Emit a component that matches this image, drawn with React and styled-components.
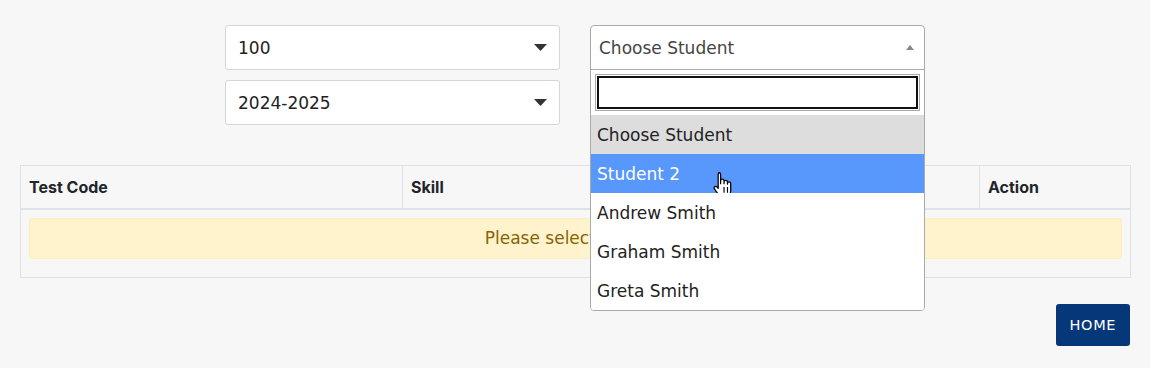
import React from 'react'
import styled, {createGlobalStyle} from 'styled-components'

const GlobalStyle = createGlobalStyle`
  body {
    margin: 0;
    background: #f7f7f7;
    font-family: "DejaVu Sans", "Liberation Sans", sans-serif;
    color: #212529;
  }
`

const students = ['Choose Student', 'Student 2', 'Andrew Smith', 'Graham Smith', 'Greta Smith']

function Caret() {
  return (
    <svg width="13" height="7" viewBox="0 0 13 7">
      <path d="M0 0 H13 L6.5 7 Z" fill="#333" />
    </svg>
  )
}

function HandCursor() {
  return (
    <svg width="20" height="26" viewBox="0 0 20 26">
      <path
        d="M5 1.5c1 0 1.6.7 1.6 1.6V11V8.6c0-.9.7-1.5 1.5-1.5s1.5.6 1.5 1.5V11V9.6c0-.9.7-1.5 1.5-1.5s1.5.6 1.5 1.5V11.5V10.8c0-.9.7-1.4 1.4-1.4s1.4.5 1.4 1.4v6.4c0 3.6-2.3 6.4-5.8 6.4H9.4c-2 0-3.2-1-4.3-2.5L1.3 15.6c-.5-.8-.3-1.600.4-2s1.5-.2 2 .4l.8 1.1V3.1c0-.9.6-1.6 1.5-1.6z"
        fill="#fff"
        stroke="#000"
        strokeWidth="1.1"
        strokeLinejoin="round"
      />
      <path d="M9.6 14v5M12.6 14v5" stroke="#000" strokeWidth="1" />
    </svg>
  )
}

function App() {
  return (
    <>
      <GlobalStyle />
      <Page>
        <Filters>
          <Column>
            <SelectBox>
              <span>100</span>
              <Caret />
            </SelectBox>
            <SelectBox>
              <span>2024-2025</span>
              <Caret />
            </SelectBox>
          </Column>
          <StudentPicker>
            <PickerHead>
              <span>Choose Student</span>
              <UpArrow />
            </PickerHead>
            <Dropdown>
              <SearchWrap>
                <SearchInput type="text" />
              </SearchWrap>
              {students.map((name, i) => (
                <Option key={name} $state={i === 0 ? 'selected' : i === 1 ? 'hover' : ''}>
                  {name}
                  {i === 1 && (
                    <CursorSpot>
                      <HandCursor />
                    </CursorSpot>
                  )}
                </Option>
              ))}
            </Dropdown>
          </StudentPicker>
        </Filters>

        <Table>
          <colgroup>
            <col style={{width: 382}} />
            <col style={{width: 288}} />
            <col style={{width: 289}} />
            <col style={{width: 151}} />
          </colgroup>
          <thead>
            <tr>
              <Th>Test Code</Th>
              <Th>Skill</Th>
              <Th>Score</Th>
              <Th>Action</Th>
            </tr>
          </thead>
          <tbody>
            <tr>
              <Td colSpan={4}>
                <Alert>Please select student</Alert>
              </Td>
            </tr>
          </tbody>
        </Table>

        <Footer>
          <HomeButton>HOME</HomeButton>
        </Footer>
      </Page>
    </>
  )
}

const Page = styled.div`
  padding: 25px 20px 0;
`

const Filters = styled.div`
  display: flex;
  justify-content: center;
  gap: 30px;
`

const Column = styled.div`
  display: flex;
  flex-direction: column;
  gap: 10px;
  width: 335px;
`

const SelectBox = styled.div`
  height: 45px;
  box-sizing: border-box;
  background: #fff;
  border: 1px solid #d3d6dc;
  border-radius: 3px;
  display: flex;
  align-items: center;
  justify-content: space-between;
  padding: 0 12px 0 12px;
  font-size: 17px;
  color: #222;
`

const StudentPicker = styled.div`
  position: relative;
  width: 335px;
  height: 45px;
`

const PickerHead = styled.div`
  height: 45px;
  box-sizing: border-box;
  background: #fff;
  border: 1px solid #aaa;
  border-radius: 4px 4px 0 0;
  display: flex;
  align-items: center;
  justify-content: space-between;
  padding: 0 8px;
  font-size: 17px;
  color: #444;
`

const UpArrow = styled.span`
  width: 0;
  height: 0;
  border-left: 4px solid transparent;
  border-right: 4px solid transparent;
  border-bottom: 5px solid #888;
  margin-right: 2px;
`

const Dropdown = styled.div`
  position: absolute;
  top: 44px;
  left: 0;
  right: 0;
  z-index: 5;
  background: #fff;
  border: 1px solid #aaa;
  border-radius: 0 0 4px 4px;
  overflow: hidden;
`

const SearchWrap = styled.div`
  padding: 4px;
`

const SearchInput = styled.input`
  display: block;
  width: 100%;
  height: 37px;
  box-sizing: border-box;
  border: 1px solid #aaa;
  background: #fff;
  padding: 0;
  margin: 0;
  outline: 2px solid #111;
  outline-offset: -4px;
  border-radius: 0;
  box-shadow: none;
`

const Option = styled.div`
  position: relative;
  height: 39px;
  display: flex;
  align-items: center;
  padding: 0 6px;
  font-size: 17px;
  color: ${p => (p.$state === 'hover' ? '#fff' : '#222')};
  background: ${p => (p.$state === 'selected' ? '#ddd' : p.$state === 'hover' ? '#5897fb' : '#fff')};
`

const CursorSpot = styled.span`
  position: absolute;
  left: 122px;
  top: 17px;
  line-height: 0;
  transform: scale(1.15);
  transform-origin: top left;
`

const Table = styled.table`
  width: 100%;
  margin-top: 40px;
  border-collapse: collapse;
  table-layout: fixed;
  border: 1px solid #dee2e6;
`

const Th = styled.th`
  height: 43px;
  box-sizing: border-box;
  text-align: left;
  padding: 0 8px;
  font-family: Inter, "DejaVu Sans", sans-serif;
  font-weight: 700;
  font-size: 16px;
  color: #212529;
  border: 1px solid #dee2e6;
  border-bottom: 2px solid #dee2e6;
`

const Td = styled.td`
  padding: 8px 8px 18px;
`

const Alert = styled.div`
  height: 41px;
  box-sizing: border-box;
  display: flex;
  align-items: center;
  justify-content: center;
  background: #fff3cd;
  border: 1px solid #ffeeba;
  border-radius: 3px;
  color: #856404;
  font-size: 17px;
`

const Footer = styled.div`
  display: flex;
  justify-content: flex-end;
  margin-top: 26px;
`

const HomeButton = styled.button`
  background: #063778;
  color: #fff;
  border: none;
  border-radius: 3px;
  height: 42px;
  padding: 0 14px;
  font-family: "DejaVu Sans", sans-serif;
  font-size: 14.5px;
  letter-spacing: 0.6px;
`

export default App
